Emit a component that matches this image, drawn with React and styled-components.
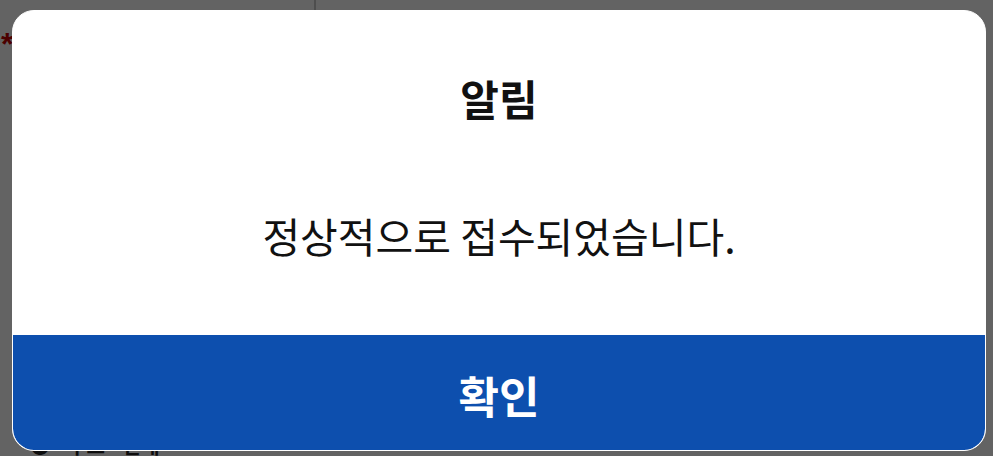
import React from 'react';
import styled, { createGlobalStyle } from 'styled-components';

const GlobalStyle = createGlobalStyle`
  html, body {
    margin: 0;
    padding: 0;
    width: 993px;
    height: 456px;
    overflow: hidden;
    font-family: "Noto Sans CJK KR", "Noto Sans", sans-serif;
  }
`;

// page sitting behind the modal
const Page = styled.div`
  position: relative;
  width: 993px;
  height: 456px;
  background: #fff;
  display: grid;
  grid-template-rows: 10px 1fr 16px;
  grid-template-columns: 316px 1fr;
`;

const TopCell = styled.div`
  border-right: ${props => props.divider ? '2px solid #c8c8c8' : 'none'};
`;

const FormArea = styled.div`
  grid-column: 1 / 3;
  padding: 18px 0 0 1px;
  color: #c40000;
  font-family: "Liberation Sans", sans-serif;
  font-size: 32px;
  font-weight: 700;
  line-height: 1;
`;

const BottomRow = styled.div`
  grid-column: 1 / 3;
  display: flex;
  align-items: flex-end;
  gap: 18px;
  padding: 0 0 0 30px;
  color: #222;
  font-size: 20px;
  font-weight: 700;
  line-height: 1;
  overflow: hidden;
`;

const Overlay = styled.div`
  position: absolute;
  inset: 0;
  background: rgba(0, 0, 0, 0.61);
  display: flex;
  padding: 10px 0 0 12px;
`;

const Dialog = styled.div`
  width: 974px;
  height: 441px;
  box-sizing: border-box;
  background: #fff;
  border: 1px solid #fff;
  border-radius: 22px;
  overflow: hidden;
  display: flex;
  flex-direction: column;
`;

const Body = styled.div`
  flex: 1;
  display: flex;
  flex-direction: column;
  align-items: center;
  color: #111;
`;

const Title = styled.h2`
  margin: 63px 0 0;
  font-size: 42px;
  font-weight: 700;
  line-height: 48px;
`;

const Message = styled.p`
  margin: 89px 0 0;
  font-size: 41px;
  font-weight: 400;
  line-height: 48px;
`;

const ConfirmButton = styled.button`
  height: 115px;
  padding: 4px 0 0;
  border: none;
  border-radius: 0 0 21px 21px;
  background: #0d4fae;
  color: #fff;
  font-family: inherit;
  font-size: 44px;
  font-weight: 700;
  line-height: 1;
  cursor: pointer;
`;

export default function App() {
  return (
    <>
      <GlobalStyle />
      <Page>
        <TopCell divider />
        <TopCell />
        <FormArea>*</FormArea>
        <BottomRow>
          <span>●</span>
          <span>주소</span>
          <span>안내</span>
        </BottomRow>
        <Overlay>
          <Dialog>
            <Body>
              <Title>알림</Title>
              <Message>정상적으로 접수되었습니다.</Message>
            </Body>
            <ConfirmButton>확인</ConfirmButton>
          </Dialog>
        </Overlay>
      </Page>
    </>
  );
}
